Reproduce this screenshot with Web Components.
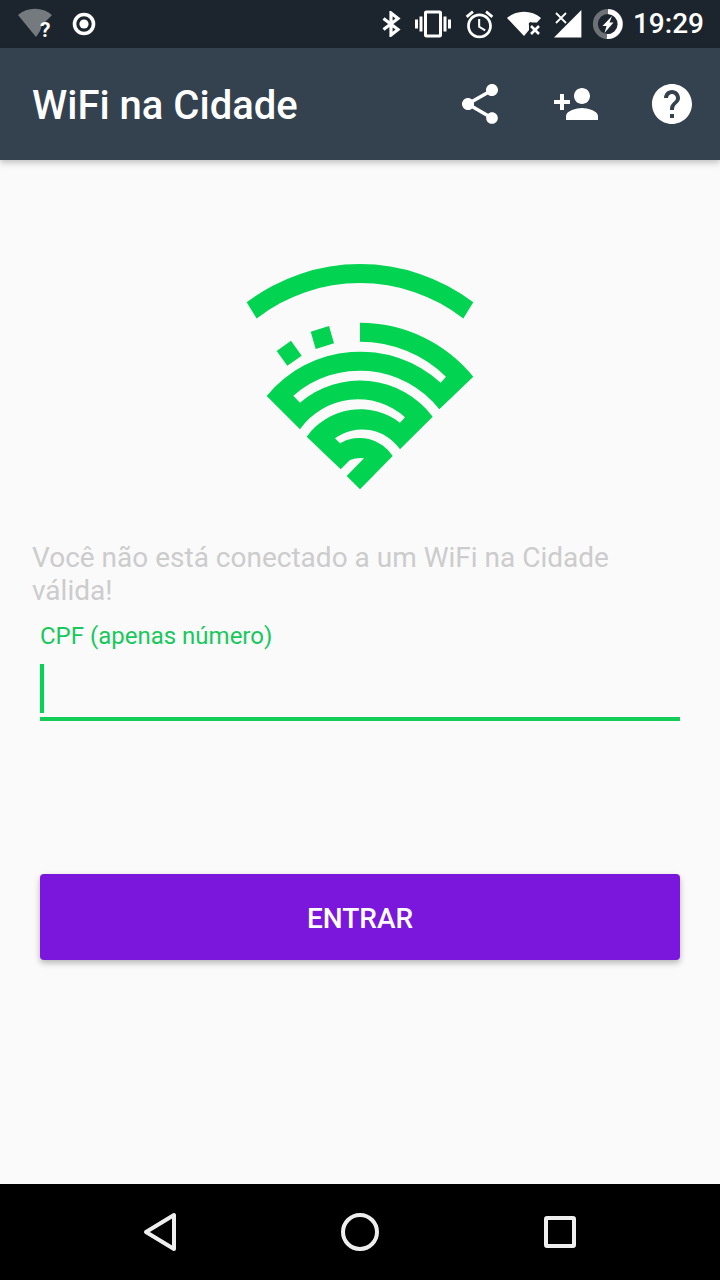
<!DOCTYPE html>
<html lang="pt-BR">
<head>
<meta charset="utf-8">
<title>WiFi na Cidade</title>
<style>
  html, body { margin: 0; padding: 0; background: #fafafa; }
  body { font-family: Roboto, "Liberation Sans", sans-serif; }
  app-screen { height: 1280px; }
</style>
</head>
<body>
<app-screen>
  <status-bar slot="status" time="19:29"></status-bar>
  <app-bar slot="bar" heading="WiFi na Cidade"></app-bar>
  <wifi-logo></wifi-logo>
  <notice-text>Você não está conectado a um WiFi na Cidade válida!</notice-text>
  <cpf-field>CPF (apenas número)</cpf-field>
  <action-button>ENTRAR</action-button>
  <nav-bar slot="nav"></nav-bar>
</app-screen>

<script>
/* material icon paths, 24 unit box */
const ICONS = {
  vibration: "M0 15h2V9H0v6zm3 2h2V7H3v10zm19-8v6h2V9h-2zm-3 8h2V7h-2v10zM16.5 3h-9C6.67 3 6 3.67 6 4.5v15c0 .83.67 1.5 1.5 1.5h9c.83 0 1.5-.67 1.5-1.5v-15c0-.83-.67-1.5-1.5-1.5zM16 19H8V5h8v14z",
  alarm: "M22 5.72l-4.6-3.86-1.29 1.53 4.6 3.86L22 5.72zM7.88 3.39L6.6 1.86 2 5.71l1.29 1.53 4.59-3.85zM12.5 8H11v6l4.75 2.85.75-1.23-4-2.37V8zM12 4c-4.97 0-9 4.03-9 9s4.03 9 9 9c4.97 0 9-4.03 9-9s-4.03-9-9-9zm0 16c-3.87 0-7-3.13-7-7s3.13-7 7-7 7 3.13 7 7-3.13 7-7 7z",
  share: "M18 16.08c-.76 0-1.44.3-1.96.77L8.91 12.7c.05-.23.09-.46.09-.7s-.04-.47-.09-.7l7.05-4.11c.54.5 1.25.81 2.04.81 1.66 0 3-1.34 3-3s-1.34-3-3-3-3 1.34-3 3c0 .24.04.47.09.7L8.04 9.81C7.5 9.31 6.79 9 6 9c-1.66 0-3 1.34-3 3s1.34 3 3 3c.79 0 1.5-.31 2.04-.81l7.12 4.16c-.05.21-.08.43-.08.65 0 1.61 1.31 2.92 2.92 2.92 1.61 0 2.92-1.31 2.92-2.92s-1.31-2.92-2.92-2.92z",
  personAdd: "M15 12c2.21 0 4-1.79 4-4s-1.79-4-4-4-4 1.79-4 4 1.79 4 4 4zm-9-2V7H4v3H1v2h3v3h2v-3h3v-2H6zm9 4c-2.67 0-8 1.34-8 4v2h16v-2c0-2.66-5.33-4-8-4z",
  help: "M12 2C6.48 2 2 6.48 2 12s4.48 10 10 10 10-4.48 10-10S17.52 2 12 2zm1 17h-2v-2h2v2zm2.07-7.75l-.9.92C13.45 12.9 13 13.5 13 15h-2v-.5c0-1.1.45-2.1 1.17-2.83l1.24-1.26c.37-.36.59-.86.59-1.41 0-1.1-.9-2-2-2s-2 .9-2 2H8c0-2.21 1.79-4 4-4s4 1.79 4 4c0 .88-.36 1.68-.93 2.25z",
};

class UiIcon extends HTMLElement {
  connectedCallback() {
    const size = this.getAttribute("size") || 48;
    const path = ICONS[this.getAttribute("name")];
    this.attachShadow({ mode: "open" }).innerHTML = /* html */ `
    <style>
      :host { display: block; width: ${size}px; height: ${size}px; flex: none; }
      svg { display: block; width: 100%; height: 100%; fill: #fff; }
    </style>
    <svg viewBox="0 0 24 24"><path d="${path}"/></svg>`;
  }
}

class AppScreen extends HTMLElement {
  constructor() {
    super();
    this.attachShadow({ mode: "open" }).innerHTML = /* html */ `
    <style>
      :host { display: flex; flex-direction: column; width: 720px; background: #fafafa; }
      main {
        flex: 1;
        display: flex;
        flex-direction: column;
        padding: 100px 40px 0;
      }
      header { position: relative; z-index: 1; }
    </style>
    <header>
      <slot name="status"></slot>
      <slot name="bar"></slot>
    </header>
    <main><slot></slot></main>
    <slot name="nav"></slot>`;
  }
}

class StatusBar extends HTMLElement {
  connectedCallback() {
    this.attachShadow({ mode: "open" }).innerHTML = /* html */ `
    <style>
      :host {
        display: flex;
        align-items: center;
        height: 48px;
        padding: 0 16px 0 18px;
        background: #1c252e;
        color: #fff;
      }
      svg { display: block; flex: none; }
      .left { display: flex; align-items: center; gap: 16px; flex: 1; }
      .right { display: flex; align-items: center; }
      .time { font: 500 28px/48px Roboto, sans-serif; margin-left: 9px; }
      .q { font: 700 21px Roboto, sans-serif; fill: #fff; }
    </style>
    <div class="left">
      <svg width="38" height="48" viewBox="0 0 38 48">
        <path d="M0 15 A26 26 0 0 1 34 15 L24 25 L22 31 L18 37 Z" fill="#757a7e"/>
        <text class="q" x="22" y="37">?</text>
      </svg>
      <svg width="24" height="24" viewBox="0 0 24 24">
        <circle cx="12" cy="12" r="9.5" fill="none" stroke="#fff" stroke-width="3.6"/>
        <circle cx="12" cy="12" r="4.6" fill="#fff"/>
      </svg>
    </div>
    <div class="right">
      <svg width="26" height="26" viewBox="0 0 26 26" fill="none" stroke="#fff" stroke-width="3.2">
        <path d="M5.5 7.5 L20 18.5 L13 24 V2 L20 7.5 L5.5 18.5"/>
      </svg>
      <ui-icon name="vibration" size="36" style="margin-left:11px"></ui-icon>
      <ui-icon name="alarm" size="33" style="margin-left:12px"></ui-icon>
      <svg width="34" height="26" viewBox="0 0 34 26" style="margin-left:11px">
        <path d="M0 7 A26 26 0 0 1 34 7 L30 11.5 H25 A2 2 0 0 0 22 14 V19 L17 25 Z" fill="#fff"/>
        <path d="M24 15 L32 23 M32 15 L24 23" stroke="#fff" stroke-width="2.6" fill="none"/>
      </svg>
      <svg width="28" height="28" viewBox="0 0 28 28" style="margin-left:13px">
        <path d="M0 27.4 L27.4 0 V27.4 Z" fill="#fff"/>
        <path d="M2 3 L12 13 M12 3 L2 13" stroke="#1c252e" stroke-width="4.4" fill="none"/>
        <path d="M2 3 L12 13 M12 3 L2 13" stroke="#fff" stroke-width="1.8" fill="none"/>
      </svg>
      <svg width="32" height="32" viewBox="0 0 32 32" style="margin-left:10px">
        <circle cx="16" cy="16" r="12.6" fill="none" stroke="#6e7277" stroke-width="5"/>
        <path d="M16 3.4 A12.6 12.6 0 0 1 15 28.6" fill="none" stroke="#fff" stroke-width="5"/>
        <path d="M20 8 L10.5 18 H14.5 L12.5 25 L21.5 14.5 H17.5 Z" fill="#fff"/>
      </svg>
      <span class="time">${this.getAttribute("time")}</span>
    </div>`;
  }
}

class AppBar extends HTMLElement {
  connectedCallback() {
    this.attachShadow({ mode: "open" }).innerHTML = /* html */ `
    <style>
      :host {
        display: flex;
        align-items: center;
        height: 112px;
        background: #34414e;
        box-shadow: 0 3px 6px rgba(0, 0, 0, .22);
        color: #fff;
      }
      h1 {
        flex: 1;
        margin: 0;
        padding: 3px 0 0 32px;
        font: 500 40px/109px Roboto, sans-serif;
      }
      .btn { width: 96px; height: 112px; display: flex; align-items: center; justify-content: center; }
    </style>
    <h1>${this.getAttribute("heading")}</h1>
    <div class="btn"><ui-icon name="share"></ui-icon></div>
    <div class="btn"><ui-icon name="personAdd"></ui-icon></div>
    <div class="btn"><ui-icon name="help"></ui-icon></div>`;
  }
}

class WifiLogo extends HTMLElement {
  constructor() {
    super();
    this.attachShadow({ mode: "open" }).innerHTML = /* html */ `
    <style>
      :host { display: flex; justify-content: center; margin-bottom: 49px; }
      svg { display: block; fill: #02d452; }
    </style>
    <svg width="240" height="232" viewBox="240 260 240 232">
      <path d="M246.7 302.3 A187 187 0 0 1 473.3 302.3 L463.3 318.6 A167.7 167.7 0 0 0 256.7 318.6 Z"/>
      <path d="M276.7 351 L291 340.7 L301.7 355.7 L287.3 365.7 Z"/>
      <path d="M310.7 331.7 L329 326 L334 343.3 L315.7 349 Z"/>
      <path d="M360 322.7 A146 146 0 0 1 473.3 376.7 L439.3 409.3
        A101 101 0 0 0 293.3 395.7 L300 402.7
        A91.5 91.5 0 0 1 432.7 416.7 L400 449.3
        A46 46 0 0 0 335 438.3 L340 443.3
        A39 39 0 0 1 392.7 456 L360 489.3 L346.7 476 L364 458.3
        A30 30 0 0 0 350 460 L340.7 469.3 L306.7 436.7
        A65.7 65.7 0 0 1 400 422.7 L405 417.3
        A70.6 70.6 0 0 0 300 429.3 L266.7 396
        A120.3 120.3 0 0 1 440.7 382.7 L446 376.7
        A123 123 0 0 0 360 341.7 Z"/>
    </svg>`;
  }
}

class NoticeText extends HTMLElement {
  constructor() {
    super();
    this.attachShadow({ mode: "open" }).innerHTML = /* html */ `
    <style>
      :host {
        display: block;
        margin: 0 -8px 0 -8px;
        font: 400 28px/33px Roboto, sans-serif;
        color: #cccccc;
      }
    </style>
    <slot></slot>`;
  }
}

class CpfField extends HTMLElement {
  constructor() {
    super();
    this.attachShadow({ mode: "open" }).innerHTML = /* html */ `
    <style>
      :host { display: block; margin-top: 15px; }
      label { display: block; font: 400 24px/28px Roboto, sans-serif; color: #17c95c; }
      .box {
        margin-top: 14px;
        height: 53px;
        border-bottom: 4px solid #14cc58;
      }
      .caret { display: block; width: 4px; height: 49px; background: #06d253; }
    </style>
    <label><slot></slot></label>
    <div class="box"><span class="caret"></span></div>`;
  }
}

class ActionButton extends HTMLElement {
  constructor() {
    super();
    this.attachShadow({ mode: "open" }).innerHTML = /* html */ `
    <style>
      :host {
        display: flex;
        align-items: center;
        justify-content: center;
        box-sizing: border-box;
        height: 86px;
        padding-top: 2px;
        margin-top: 153px;
        background: #7b16dc;
        border-radius: 4px;
        box-shadow: 0 3px 6px rgba(0, 0, 0, .28);
        color: #fff;
        font: 500 28px Roboto, sans-serif;
      }
    </style>
    <slot></slot>`;
  }
}

class NavBar extends HTMLElement {
  constructor() {
    super();
    this.attachShadow({ mode: "open" }).innerHTML = /* html */ `
    <style>
      :host {
        display: flex;
        justify-content: center;
        align-items: center;
        height: 96px;
        background: #000;
      }
      .btn { width: 200px; display: flex; justify-content: center; }
      svg { display: block; fill: none; stroke: #eee; stroke-width: 4; stroke-linejoin: round; }
    </style>
    <div class="btn">
      <svg width="40" height="40" viewBox="0 0 40 40"><path d="M6 20 L34 3 V37 Z"/></svg>
    </div>
    <div class="btn">
      <svg width="40" height="40" viewBox="0 0 40 40"><circle cx="20" cy="20" r="17"/></svg>
    </div>
    <div class="btn">
      <svg width="40" height="40" viewBox="0 0 40 40"><rect x="6" y="6" width="28" height="28" rx="1"/></svg>
    </div>`;
  }
}

customElements.define("ui-icon", UiIcon);
customElements.define("app-screen", AppScreen);
customElements.define("status-bar", StatusBar);
customElements.define("app-bar", AppBar);
customElements.define("wifi-logo", WifiLogo);
customElements.define("notice-text", NoticeText);
customElements.define("cpf-field", CpfField);
customElements.define("action-button", ActionButton);
customElements.define("nav-bar", NavBar);
</script>
</body>
</html>
